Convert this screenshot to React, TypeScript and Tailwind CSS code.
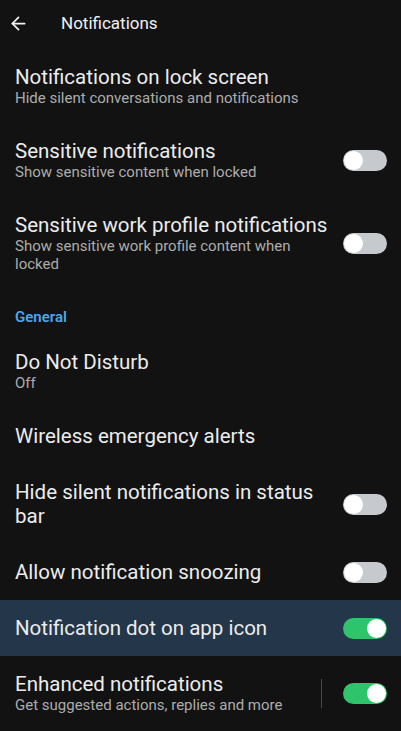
import { ArrowLeft } from "lucide-react";

type Row = {
  title: string;
  subtitle?: string;
  toggle?: "on" | "off";
  highlight?: boolean;
  divider?: boolean;
};

const lockRows: Row[] = [
  {
    title: "Notifications on lock screen",
    subtitle: "Hide silent conversations and notifications",
  },
  {
    title: "Sensitive notifications",
    subtitle: "Show sensitive content when locked",
    toggle: "off",
  },
  {
    title: "Sensitive work profile notifications",
    subtitle: "Show sensitive work profile content when locked",
    toggle: "off",
  },
];

const generalRows: Row[] = [
  { title: "Do Not Disturb", subtitle: "Off" },
  { title: "Wireless emergency alerts" },
  { title: "Hide silent notifications in status bar", toggle: "off" },
  { title: "Allow notification snoozing", toggle: "off" },
  { title: "Notification dot on app icon", toggle: "on", highlight: true },
  {
    title: "Enhanced notifications",
    subtitle: "Get suggested actions, replies and more",
    toggle: "on",
    divider: true,
  },
];

function Toggle({ on }: { on: boolean }) {
  return (
    <div
      className={`w-[44px] h-[21px] rounded-full flex items-center px-[1px] shrink-0 ${
        on ? "bg-[#2ec46b] justify-end" : "bg-[#c6c9cd] justify-start"
      }`}
    >
      <div className="w-[19px] h-[19px] rounded-full bg-white" />
    </div>
  );
}

function SettingRow({ row }: { row: Row }) {
  return (
    <div
      className={`flex items-center pl-[15px] pr-[14px] py-4 ${
        row.highlight ? "bg-[#243649]" : ""
      }`}
    >
      <div className="flex-1 min-w-0">
        <p className="text-[20.5px] leading-6 text-[#ececec]">{row.title}</p>
        {row.subtitle && (
          <p className="text-[15px] leading-[18px] text-[#acacac]">
            {row.subtitle}
          </p>
        )}
      </div>
      {row.divider && <div className="w-px h-[29px] bg-[#4a4a4a] mx-[21px]" />}
      {row.toggle && (
        <div className={row.divider ? "" : "ml-3"}>
          <Toggle on={row.toggle === "on"} />
        </div>
      )}
    </div>
  );
}

export default function App() {
  return (
    <div
      className="w-[401px] h-[731px] overflow-hidden bg-[#121212] text-white"
      style={{ fontFamily: "Roboto, 'Noto Sans', sans-serif" }}
    >
      {/* Top bar */}
      <div className="h-[49px] flex items-center pb-[3px]">
        <div className="w-[61px] flex items-center pl-[8px]">
          <ArrowLeft size={21} strokeWidth={2} className="text-[#f2f2f2]" />
        </div>
        <h1 className="text-[17px] leading-6 text-[#f0f0f0]">Notifications</h1>
      </div>

      {lockRows.map((r, i) => (
        <SettingRow key={i} row={r} />
      ))}

      <p className="pl-[15px] pt-[19px] pb-[8px] text-[15px] leading-[18px] font-semibold text-[#4fa6ea]">
        General
      </p>

      {generalRows.map((r, i) => (
        <SettingRow key={i} row={r} />
      ))}
    </div>
  );
}
